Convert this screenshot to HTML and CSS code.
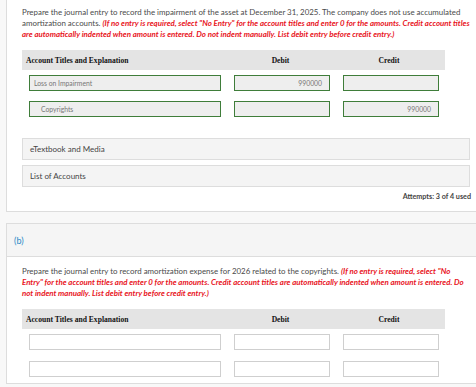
FILE: index.html
```html
<!DOCTYPE html>
<html lang="en">
<head>
  <meta charset="utf-8">
  <title>Journal Entry</title>
  <link rel="stylesheet" href="styles.css">
</head>
<body>
  <div class="card card-a">
    <p class="prompt">Prepare the journal entry to record the impairment of the asset at December 31, 2025. The company does not use accumulated amortization accounts. <em class="note">(If no entry is required, select "No Entry" for the account titles and enter 0 for the amounts. Credit account titles are automatically indented when amount is entered. Do not indent manually. List debit entry before credit entry.)</em></p>

    <div class="journal">
      <div class="head">
        <div class="h-account">Account Titles and Explanation</div>
        <div class="h-num">Debit</div>
        <div class="h-num">Credit</div>
      </div>
      <div class="row">
        <div class="cell-account"><div class="field done">Loss on Impairment</div></div>
        <div class="cell-num"><div class="field done num">990000</div></div>
        <div class="cell-num"><div class="field done num"></div></div>
      </div>
      <div class="row">
        <div class="cell-account"><div class="field done indent">Copyrights</div></div>
        <div class="cell-num"><div class="field done num"></div></div>
        <div class="cell-num"><div class="field done num">990000</div></div>
      </div>
    </div>

    <div class="links">
      <div class="link-box">eTextbook and Media</div>
      <div class="link-box">List of Accounts</div>
    </div>
    <div class="attempts">Attempts: 3 of 4 used</div>
  </div>

  <div class="card card-b">
    <div class="part-head">(b)</div>
    <div class="part-body">
      <p class="prompt">Prepare the journal entry to record amortization expense for 2026 related to the copyrights. <em class="note">(If no entry is required, select "No Entry" for the account titles and enter 0 for the amounts. Credit account titles are automatically indented when amount is entered. Do not indent manually. List debit entry before credit entry.)</em></p>

      <div class="journal">
        <div class="head">
          <div class="h-account">Account Titles and Explanation</div>
          <div class="h-num">Debit</div>
          <div class="h-num">Credit</div>
        </div>
        <div class="row">
          <div class="cell-account"><div class="field"></div></div>
          <div class="cell-num"><div class="field"></div></div>
          <div class="cell-num"><div class="field"></div></div>
        </div>
        <div class="row">
          <div class="cell-account"><div class="field"></div></div>
          <div class="cell-num"><div class="field"></div></div>
          <div class="cell-num"><div class="field"></div></div>
        </div>
      </div>
    </div>
  </div>
</body>
</html>
```

FILE: styles.css
```css
:root {
  --text-font: Lato, 'Open Sans', sans-serif;
  --head-font: 'Liberation Serif', 'Times New Roman', serif;
  --page-bg: #f8f8f8;
  --line: #dddddd;
  --text: #4a4a4a;
  --red: #e8141d;
  --green: #3f7d3a;
}

* {
  box-sizing: border-box;
  margin: 0;
  padding: 0;
}

body {
  font-family: var(--text-font);
  color: var(--text);
  background-color: var(--page-bg);
  padding-left: 6px;
  width: 476px;
  height: 387px;
  overflow: hidden;
}

.card {
  background: #fff;
  border: 1px solid var(--line);
  border-right: none;
  width: 480px;
}

.card-a {
  border-top: none;
  padding: 7px 0 10px 15px;
}

.card-b {
  margin-top: 11px;
}

.prompt {
  font-size: 7.9px;
  line-height: 11px;
  width: 453px;
}

.card-b .prompt {
  width: 449px;
}

.note {
  color: var(--red);
  font-weight: 700;
}

.journal {
  width: 423px;
  margin-top: 10px;
}

.head,
.row {
  display: grid;
  grid-template-columns: 206px 109px 108px;
}

.head {
  background: #e4e4e4;
  height: 20px;
  align-items: center;
  font-family: var(--head-font);
  font-weight: 700;
  font-size: 7.6px;
  color: #111;
}

.h-account {
  padding-left: 4px;
}

.h-num {
  text-align: center;
  padding-right: 4px;
}

.row {
  padding: 5px 0;
}

.cell-account {
  padding-left: 7px;
}

.cell-num {
  padding-left: 6px;
}

.field {
  height: 16px;
  border: 1px solid #cfcfcf;
  background: #fff;
  font-size: 6.8px;
  line-height: 14px;
  color: #777;
  padding: 0 4px;
}

.cell-account .field {
  width: 192px;
}

.cell-num .field {
  width: 96px;
}

.field.done {
  border-color: var(--green);
  background: #eeeeee;
}

.field.indent {
  padding-left: 11px;
}

.field.num {
  text-align: right;
  padding-right: 7px;
}

.links {
  margin-top: 16px;
  width: 448px;
  display: flex;
  flex-direction: column;
  gap: 5px;
}

.link-box {
  height: 22px;
  background: #f4f4f4;
  border: 1px solid var(--line);
  font-size: 8px;
  line-height: 20px;
  padding-left: 7px;
  color: #444;
}

.attempts {
  width: 449px;
  text-align: right;
  font-size: 7.2px;
  font-weight: 700;
  color: #444;
  margin-top: 5px;
}

.part-head {
  height: 33px;
  background: #f5f5f5;
  border-bottom: 1px solid var(--line);
  color: #2d8ac7;
  font-size: 9px;
  line-height: 33px;
  padding-left: 7px;
}

.part-body {
  padding: 9px 0 0 15px;
}

.card-b .row {
  padding: 5px 0 6px;
}
```
